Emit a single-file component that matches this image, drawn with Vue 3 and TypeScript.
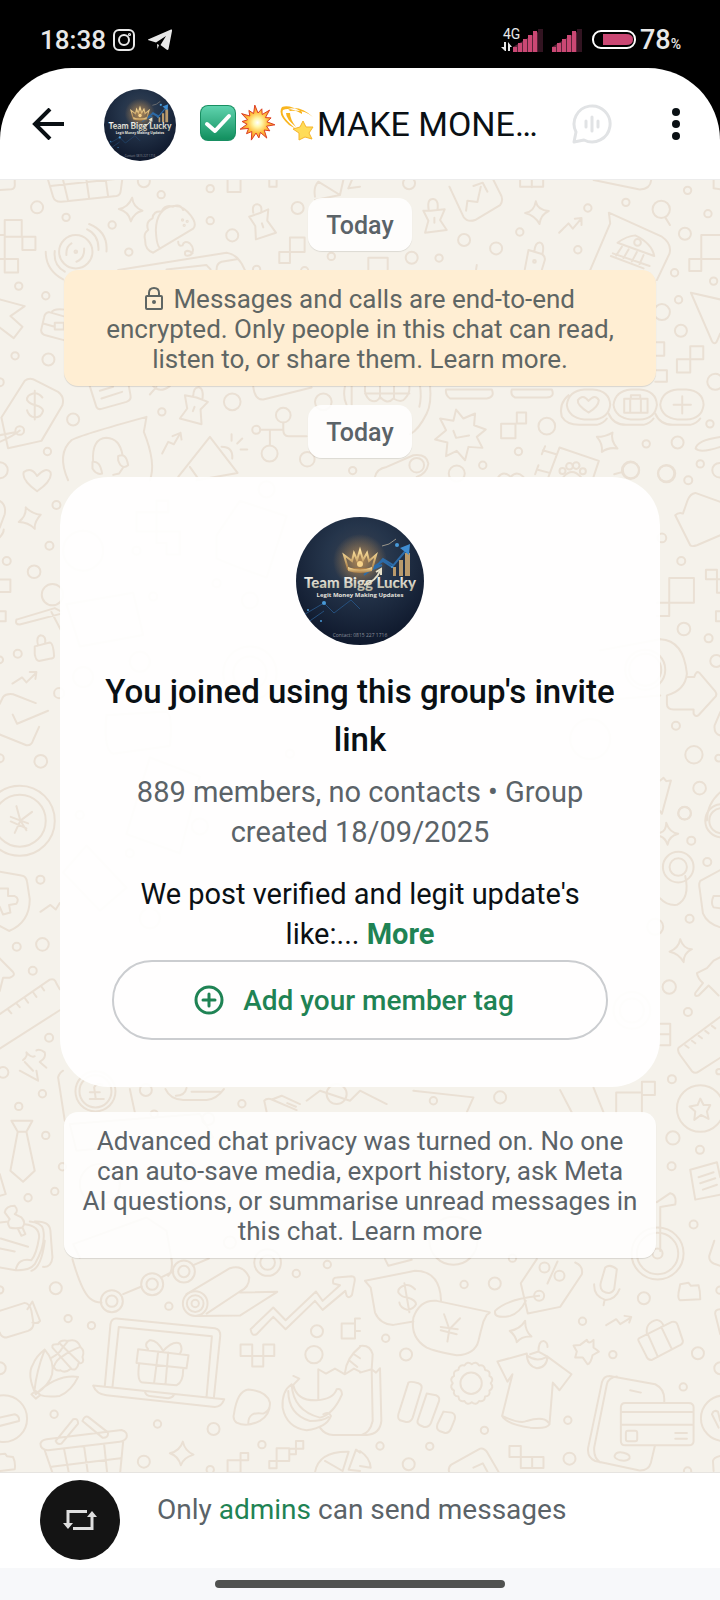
<script setup lang="ts">
interface Doodle {
  x: number
  y: number
  sx: number
  sy: number
  dots: string
  paths: string[]
}

const T = 1 / 3

const doodles: Doodle[] = [
  {
    x: 0, y: 180, sx: T, sy: T,
    dots: '112,82,18 199,112,11 484,44,11 432,4,18 337,135,11 387,216,11 631,26,11 631,122,11 697,166,18 893,84,18 994,229,11 770,268,11 914,272,11 57,318,11 138,347,11 46,527,11 146,538,18 228,215,50 228,215,4 220,718,18 697,665,25 486,695,11 143,814,11 850,705,22 769,749,12 809,820,24 922,837,22 1058,871,11 970,665,25 60,751,13 548,120,2 562,124,2 553,136,2 0,606,12 0,870,24',
    paths: [
      'M145 0L160 50Q165 66 185 65L350 48Q362 46 363 30L367 0M152 18L365-5M190 0L205 62M260 0L268 55M318 0L325 50M0 30L35 28Q47 26 45 10V0',
      'M397 53Q400 82 428 92Q403 97 393 124Q387 95 357 87Q385 83 397 53Z',
      'M0 165H15V120H66V170H107V210H68V170H15V237H55V277H15V237H0M15 165V237M683 0V36H722V0M808 0V20H830V0',
      'M262 148Q298 165 296 210M268 132Q325 155 320 214M165 213Q160 255 195 275M138 215Q138 270 190 298M200 225Q198 200 215 190M230 245Q255 235 253 205',
      'M460 218L580 146Q592 132 574 108Q550 74 520 78Q470 85 468 150Q470 200 482 205M460 218Q435 210 436 180Q430 160 445 150Q436 125 458 115Q460 92 485 95Q495 72 520 80Q540 70 550 90M535 185Q535 200 548 196Q552 180 570 190Q588 208 572 225Q552 232 556 215Q566 208 578 220',
      'M748 110L783 98L805 88L802 122L828 158L768 178L766 138ZM760 98Q755 72 773 73Q787 75 784 95M786 130L790 142',
      'M870 172H914V216H870ZM838 216H870V249H838Z',
      'M355 270L680 218Q715 222 735 270M650 268Q650 250 665 245L715 237M500 268L620 255L632 268',
      'M0 358L75 378L32 408L68 440L42 474L0 442',
      'M190 408L148 396Q135 398 133 412L124 450Q125 464 140 466L192 480M155 398Q160 385 190 388M130 430L165 440M165 428H192V448H165Z',
      'M75 602Q90 590 110 602L175 635Q195 650 188 675L125 782L25 804L5 712ZM0 785Q40 768 60 751M0 765L46 756',
      'M128 652Q115 636 100 640Q80 645 82 660Q90 672 108 675Q130 682 130 692Q125 712 105 712Q86 708 82 690M105 632V718',
      'M270 618L288 675Q292 690 305 686L380 665Q395 660 392 645L387 618M300 632L340 620M305 655L367 635M450 643L470 620M460 618Q480 640 510 618',
      'M205 900Q170 820 215 780Q240 765 440 710L432 755Q470 850 450 900M280 845Q275 775 320 773Q360 775 368 825M278 845Q300 840 307 880Q290 885 278 865ZM355 828Q378 815 385 855Q365 870 355 840ZM370 862L358 880L340 884',
      'M487 820L505 785L522 792L542 758M518 768L542 758L545 778',
      'M535 890L630 770L713 878L590 900M570 860L595 895M665 800Q700 800 697 835M695 762V782M712 790L727 775M722 808H742',
      'M555 645L590 652L624 665L602 688L605 732L540 715L562 685ZM580 650Q580 620 597 621Q612 625 608 655M584 680L579 693',
      'M781 749H850V728M810 749V795M850 749Q850 768 865 768H920M760 620Q765 660 790 658L935 622M1035 618Q1028 650 1040 675M1055 618V675',
      'M945 50Q940 20 955 5L1020 45L1030 0M1020 45L945 60M1045 25L1060-10M1045 25L1080 20',
    ],
  },
  {
    x: 360, y: 180, sx: T, sy: T,
    dots: '147,10,18 312,180,18 408,205,18 479,156,11 237,234,11 155,233,18 683,84,11 653,209,11 797,67,11 903,88,26 974,161,18 1043,101,11 982,31,11 943,278,11 1060,303,11 955,359,11 905,396,24 962,452,18 1065,605,24 560,738,25 858,791,11 952,787,18 1049,731,11 1020,851,11 918,880,24 475,814,11 368,855,11 290,880,24 170,855,22 812,870,24 832,187,10 523,244,4 1078,870,22 628,858,10 648,856,10 607,872,9 668,873,9',
    paths: [
      'M268 20L310 110Q322 128 345 120L420 75Q432 60 420 40L400 0M318 92L322 62L352 66L362 20M340 18L368 8L382 35',
      'M190 92L212 92L254 88L240 120L260 150L195 158L205 122ZM206 90Q200 55 220 57Q237 60 232 90M223 113V128M915 112L929 135',
      'M527 64Q532 90 566 93Q542 103 538 132Q525 107 495 99Q522 95 527 64M597 158L625 130L638 146L664 115M644 116L664 114L664 135',
      'M505 210L545 222Q556 228 554 240L545 270M505 210L494 268M523 212Q525 188 538 187Q554 190 547 222',
      'M690 270L750 130L746 98L905 170Q935 190 928 220L890 300M882 228L772 188Q800 168 825 166Q875 190 882 228M752 228L850 265M758 220L868 258M785 200L768 226M805 208L790 234M830 216L815 244M850 225L838 252',
      'M480 0V20H549V0M515 0V22M700 0L835 28Q870 30 873 0M1060 0V25L1080 28',
      'M1080 165H1023V273H987V237H1080M992 338L1080 358M992 338L1056 485Q1062 494 1069 485L1080 460',
      'M990 498H1029V537H990ZM950 537H990V577H950ZM888 486H912V527H888M888 570H920V605H885',
      'M672 628H698Q748 632 750 674Q745 716 698 718H672Q625 712 620 674Q625 632 672 628ZM625 645Q595 670 605 710Q620 735 660 734H710Q730 730 740 715',
      'M812 628H838Q888 632 890 674Q885 716 838 718H812Q765 712 760 674Q765 632 812 628ZM745 700Q760 735 800 734H850Q870 730 880 715',
      'M952 628H978Q1028 632 1030 674Q1025 716 978 718H952Q905 712 900 674Q905 632 952 628ZM885 700Q900 735 940 734H990Q1010 730 1020 715',
      'M685 697Q650 675 653 660Q668 640 685 662Q705 640 716 660Q715 680 685 697M792 656H862V698H792ZM810 656V698M842 656V698M812 654V645H840V654M940 674H992M966 648V700',
      'M15 620Q12 645 30 660Q50 670 60 650Q82 675 100 655Q125 670 135 655Q150 640 148 620M15 640H148M60 618V655M102 618V655M180 618Q185 650 178 680M210 618Q215 670 200 700Q175 750 150 762',
      'M258 628H395Q405 650 380 655H270Q255 645 258 628M455 628H575Q585 650 560 652H465Q450 645 455 628',
      'M288 688L310 715L345 700L342 735L377 748L350 770L367 803L325 800L315 840L290 812L258 828L262 787L225 778L258 750L240 715L280 722ZM280 752L288 773L327 766',
      'M470 697H498V730H470ZM423 731H466V774H423Z',
      'M710 770Q735 770 757 757Q750 780 772 805Q745 800 725 815Q728 790 710 770',
      'M565 890L598 802L716 842L700 890M555 798L545 822M548 810L588 822M535 855L525 882M530 868L568 878M610 890Q635 860 662 890M788 875L762 882',
      'M1080 770Q1010 780 1006 805Q1020 820 1080 800M45 890Q50 865 80 860L160 825Q200 820 205 850Q200 880 170 890M415 890Q430 870 452 890Q470 870 490 890M25 268V233H83V268M350 255L348 268',
    ],
  },
  {
    x: 0, y: 470, sx: T, sy: 0.3827,
    dots: '170,91,12 149,197,12 21,237,12 103,265,19 54,479,12 0,495,10 123,760,19 122,1069,12 51,1244,12 128,1238,19 99,1307,12 148,1482,12 60,915,105 60,915,78 158,325,32 178,582,15 0,752,12 250,210,60 410,210,12 650,295,12 420,500,30 250,540,30 240,900,12 390,1000,12 450,1170,30 750,340,24 750,530,80 750,530,50 600,930,24 870,740,12 800,50,24 460,330,12',
    paths: [
      'M112 55Q65 25 72 5Q95-10 112 15Q140-10 152 5Q160 25 112 55M78 97Q98 115 123 116Q103 135 105 153Q85 135 57 135Q80 120 78 97',
      'M0 80Q20 90 15 115L0 150M0 175Q12 165 12 155M0 285H32V318H0M0 368H18V394H0',
      'M50 390L165 360L182 368M50 390Q45 403 60 403L182 375M155 370L182 415',
      'M105 460L150 450Q160 450 163 485Q163 492 150 492L118 498Q108 497 105 480ZM115 458Q108 435 122 431Q140 432 136 452M38 557L67 541L80 554L108 530M90 527L110 527L107 545',
      'M0 610L10 592Q20 582 40 585L108 608M39 638L52 662L145 628M0 690L80 718Q95 720 100 705L118 670',
      'M50 877L62 915L97 892M62 915L45 947M62 915L80 940M33 905L85 922M33 917L80 935',
      'M0 1048L65 1058Q80 1060 82 1075L90 1120Q90 1180 28 1203L0 1190M0 1092H25V1112H45Q60 1118 50 1132L28 1135L32 1155L10 1160L0 1140M122 1153L152 1135L168 1147L180 1130',
      'M0 1275L40 1310Q48 1320 30 1325L10 1325L0 1360M0 1420L150 1330Q165 1325 170 1340L180 1355M0 1510L180 1410M25 1408L35 1418M50 1392L60 1402M75 1378L85 1390M100 1363L110 1375M125 1348L133 1358',
      'M70 1540Q85 1530 80 1520Q95 1535 105 1530M110 1515Q120 1510 135 1520Q140 1535 120 1545L140 1560M75 1545L100 1568',
      'M470 80H505V110H470ZM410 110H470V160H410ZM470 160H540V220H500V190H470ZM200 350L400 320L430 430L240 460Z',
      'M320 640L500 630Q520 640 510 720L340 740Q310 730 320 640M650 170L720 80L860 120L800 280Q700 250 650 230Z',
      'M380 950L450 750L600 800L540 1000ZM190 1050L260 980L380 1090L300 1150Z',
    ],
  },
  {
    x: 600, y: 470, sx: T, sy: T,
    dots: '91,0,26 199,10,26 264,30,12 185,203,13 243,272,12 251,476,19 325,504,12 348,572,18 227,766,12 281,853,26 298,953,19 253,1028,19 355,863,10 135,598,60 135,598,48',
    paths: [
      'M360 95L285 68Q270 70 262 90L248 130Q235 125 225 135L270 225Q275 230 290 225L360 195',
      'M207 323H281V397H207ZM170 397H207V437H170M317 298H350V327H317ZM360 327H350V367H360M360 423H347V453H360',
      'M180 507Q250 510 260 610Q255 660 200 675M200 675V700Q200 717 220 717H280V730Q287 742 296 733L347 677Q350 670 345 663L297 607Q287 600 282 620H260',
      'M360 725L343 765Q340 790 360 795M180 930L190 922L198 932L212 930L185 1030L178 1020M360 965Q320 1000 320 1050M0 540L180 507M0 690L180 675',
    ],
  },
  {
    x: 560, y: 470, sx: T, sy: 0.4975,
    dots: '373,689,19 393,744,12 441,787,12 354,797,46 354,797,26 388,901,12 327,1038,20 383,1088,12 335,1223,12 338,1341,20 419,1365,12 334,1398,12 400,1515,12 420,1282,70 485,704,50 485,704,38 476,1208,8 285,917,24 215,1085,55 215,1085,36 90,540,60',
    paths: [
      'M318 708Q328 728 354 730Q325 735 322 752Q315 738 300 735M300 728Q318 725 318 708M375 815Q390 860 350 873Q320 875 300 860',
      'M480 803L420 825Q415 830 418 840L428 890Q440 910 480 918M480 855L460 855Q450 870 460 878L480 880',
      'M360 942Q370 962 395 962Q370 970 370 988Q355 970 328 967Q355 960 360 942M480 978L460 985L440 1000L410 1010Q412 1020 428 1030L405 1050Q402 1058 415 1055L445 1035L475 1055',
      'M300 1112H330V1155H300M300 1133H330M480 1098L355 1160Q350 1165 360 1175L395 1207Q405 1213 415 1208L480 1180M375 1155L385 1160M395 1146L405 1151M415 1136L425 1141M435 1126L445 1131M455 1116L465 1121',
      'M420 1262L430 1275L450 1275L440 1288L445 1303L422 1295L402 1305L405 1288L388 1278L412 1275ZM168 1290V1250H245V1290M245 1228H284V1255H245ZM0 1245L35 1290M100 1240L130 1290',
      'M390 1405L470 1390L480 1420M390 1405L405 1465L480 1455M415 1420L460 1410M420 1432L465 1422M428 1445L470 1435M290 1470L330 1452Q350 1455 345 1475L300 1480V1568',
    ],
  },
  {
    x: 0, y: 1070, sx: T, sy: T,
    dots: '128,69,11 57,107,11 138,194,11 188,288,11 165,362,11 85,381,11 438,58,18 726,99,11 287,62,60 287,62,48 463,130,11 10,5,16 300,340,60 625,145,18 560,300,30 690,515,18 1010,70,30 1300,90,11 1500,80,18',
    paths: [
      'M35 150H98L80 183H54ZM54 183L32 300L70 333L105 300L80 183M60 0L115 30L110 0M195 150L175 20Q180 5 190 0M390 55L405 125',
      'M308 42Q290 35 283 50L288 85H270M288 85H312M270 65H300',
      'M15 425Q18 405 45 405Q58 420 45 430L65 440Q80 455 68 470Q45 475 30 470Q20 455 30 445ZM55 475L65 495L77 490L68 470',
      'M0 455L20 453M75 460Q120 465 118 500Q110 550 95 568Q55 560 48 598M0 590L48 598Q90 600 105 580Q140 520 130 475Q125 455 90 452M105 452Q150 450 152 480L158 560Q155 590 130 588M95 600Q125 590 135 510M3 503L85 528M0 533L45 542M0 310L18 370L0 375',
      'M497 55Q510 85 550 88H620Q650 85 672 55M528 75Q555 75 560 52M575 63H660M800 123L793 90Q800 82 812 85L890 118M820 85L845 75L900 100M862 97L888 108',
      'M920 90L960 60L1050 90L1080 60L1160 100M1240 60L1420 80L1400 125M240 560L220 520L440 440L500 480L515 565M210 160L600 130L640 200L230 240Z',
    ],
  },
  {
    x: 0, y: 1240, sx: T, sy: T,
    dots: '168,142,18 205,233,11 275,254,11 507,196,11 889,98,11 982,71,11 951,271,18 942,341,26 163,520,11 473,549,11 641,564,18 432,662,18 631,686,11 786,611,11 336,181,33 336,181,17 457,130,33 457,130,17 552,92,33 552,92,17 803,65,40 803,65,22 586,188,37 586,188,25 586,188,11 0,382,18 12,533,70 0,147,11',
    paths: [
      'M218 55Q245 150 270 172Q285 185 305 185M370 160L425 137M487 108L520 92M582 72L627 53M515 55Q520 90 505 105',
      'M560 160L690 82Q730 70 748 110Q748 140 720 152L620 218M720 155L832 153L720 224L590 225',
      'M752 265L820 200L857 238L948 152L968 180L1020 133L1000 128Q996 110 1010 110L1055 106Q1066 106 1064 120L1056 162Q1048 174 1040 165L1036 150L968 207L945 180L857 265L820 228L770 280Q755 287 752 265Z',
      'M315 435L332 250Q335 232 350 233L645 262Q662 265 661 285L642 470M338 438L357 258L636 286L620 467M280 434L673 475Q665 498 645 498L320 463Q290 460 280 434ZM435 452Q438 465 455 466L505 472Q518 470 522 462',
      'M415 325L566 343L560 382L410 366ZM418 368Q410 425 430 425L530 433Q550 425 550 385M475 332L463 425M505 335L497 428M490 330Q470 295 450 298Q430 310 445 325M490 330Q520 298 540 308Q550 325 540 338',
      'M108 460Q80 400 100 370Q110 345 135 326Q165 360 157 400Q150 430 108 460Q170 400 235 408Q215 450 180 465Q140 470 120 462M95 460L108 450L122 462L108 473ZM158 320Q155 308 175 310Q182 295 205 300Q232 292 242 318Q256 330 248 348Q256 368 236 368Q232 392 212 384Q196 398 182 388Q168 392 162 378M158 320L215 384M180 308L240 366M162 378Q170 355 190 345Q210 330 242 318M156 350Q178 338 185 325L205 300M104 450Q110 390 135 326',
      'M0 210L75 186Q90 188 95 210L100 240Q105 262 85 270L20 290Q5 290 0 275M83 205L98 182L121 240Q115 250 98 245M0 530L45 520Q60 525 58 540L0 555',
      'M168 600L220 535Q235 530 235 548L185 608Q172 612 168 600M248 540Q255 520 268 530L325 575Q325 592 308 590ZM140 595L365 567Q385 572 380 590Q375 600 360 602L145 628Q122 625 122 608Q125 598 140 595M135 628L158 695M193 625L207 695M253 617L264 695M313 610L322 695M370 602L361 695M155 677L362 652',
      'M549 602Q555 630 581 641Q550 650 543 673Q535 645 510 637Q540 630 549 602',
      'M722 311H757V345H722ZM790 311H823V345H790ZM757 345H790V377H757ZM722 636H745V658H722ZM683 658H722V695H683ZM888 600H910V623H888ZM868 623H888V640H868ZM830 622H868V660H830ZM808 660H830V682H808ZM1025 248H1065V293H1025ZM1080 233H1065V270H1080',
      'M702 520Q712 450 745 446Q800 450 810 485Q812 520 780 540Q740 560 710 545Q698 535 702 520M745 548Q745 510 790 518Q805 512 808 500',
      'M880 405L898 413L880 432Q890 480 950 478Q1000 475 1010 445Q1025 440 1026 460Q1000 520 960 530Q880 510 875 430Q845 450 848 500Q860 560 920 568Q980 560 993 525Q985 510 970 520M865 450Q865 520 930 540Q970 540 985 528',
      'M955 475V385L978 398L1005 383L1035 400L1062 383L1080 392M960 560Q975 582 1000 582H1080M1035 395Q1040 350 1080 318M1050 360L1072 378M1062 340L1080 352',
      'M945 695Q955 630 1046 632L1028 690L975 660M1080 635L1068 626L1046 686L1080 690M0 640L16 638L22 646L40 648Q48 665 45 685L0 690',
    ],
  },
  {
    x: 360, y: 1240, sx: T, sy: T,
    dots: '457,52,11 312,131,11 404,128,18 553,80,15 598,105,15 537,165,15 851,172,18 1079,148,11 667,241,11 758,341,11 77,292,11 138,341,18 1013,337,18 1080,382,18 969,438,11 333,427,32 623,538,11 373,568,11 60,615,11 209,616,11 146,670,18 628,653,18 982,690,11 892,38,15 892,38,78 892,38,62 1090,532,68 280,0,72',
    paths: [
      'M15 120L165 90Q240 90 243 180M15 120L32 140L45 215Q60 250 100 252L160 242M165 145Q150 130 135 133Q112 140 115 155Q125 170 142 170Q168 178 168 190Q160 205 142 207Q120 200 118 185M133 127L148 214',
      'M380 222Q395 214 385 213L230 180Q180 175 160 230Q150 290 200 320Q220 330 290 343Q345 340 355 300Q362 270 370 242ZM252 220L268 265L300 232M268 265L262 302M242 258L293 265M242 268L290 280',
      'M530 55L482 127L503 218L600 198L665 100Q670 75 645 65M592 62L562 128M537 165Q440 175 405 210Q400 235 450 225Q480 215 497 180',
      'M449 270Q480 265 495 240Q495 270 514 287Q485 285 470 304Q467 285 449 270',
      'M735 80Q750 68 770 85L762 145Q750 165 727 150Q718 140 722 125ZM702 130Q700 165 735 177Q765 178 778 145M733 178L730 193',
      'M960 130L985 126L992 135L1015 133Q1020 150 1020 175L960 178Q952 175 955 155ZM738 253L768 235L780 250L812 230M793 225L813 228L807 245',
      'M840 290L935 243Q950 240 953 255L968 300Q968 310 955 315L875 357Q862 358 858 345L835 300Q832 293 840 290M862 278L893 348M903 258L935 325M860 278Q855 245 890 237Q905 240 910 255',
      'M748 405L885 430Q915 445 912 482M748 405Q730 405 725 425L684 620Q680 650 705 660L835 688Q865 690 872 665L884 614M770 407Q745 410 740 430L702 620Q700 650 720 664M810 448L842 455',
      'M795 486H985Q1000 486 1000 500V600Q1000 613 985 613H795Q782 613 782 600V500Q782 486 795 486M782 513H1000M782 551H1000M803 569H825Q831 569 831 576V595Q831 601 825 601H803Q797 601 797 595V576Q797 569 803 569M945 576H980M945 593H980M763 645Q768 630 790 635Q812 640 808 652Q800 662 780 658Q762 652 763 645',
      'M500 338L412 362L442 422L457 400L426 525Q440 550 510 560Q560 565 568 550L578 425L598 448L634 400L562 347Q560 380 530 382Q500 375 500 338ZM502 345Q530 365 562 347M426 525Q480 550 500 540Q550 525 565 545M510 340L535 332L562 347M535 332Q535 300 550 300Q563 305 562 318',
      'M680 297Q685 312 700 297L700 320L716 332L697 343Q692 368 682 370L668 350L645 350L650 332L640 314L660 312Z',
      'M145 425Q150 420 175 427Q188 432 184 445L158 530Q152 545 138 543L120 538Q112 533 115 520ZM200 458L228 463Q240 468 237 480L213 545Q207 560 192 558L180 553Q170 548 173 538ZM250 512L275 515Q288 520 284 535L272 565Q265 578 255 576L238 570Q228 565 232 550Z',
      'M0 395L35 385L48 395L60 382L64 540Q60 580 20 582H0M35 385L38 540Q30 575 5 582M0 315Q30 310 38 340L35 385',
      'M268 695Q262 680 275 670L360 623Q372 620 382 635L415 692M340 680L368 667L382 692M448 615H482V648H448ZM482 648H550V681H482ZM516 648V681',
      'M1062 0L1047 45Q1045 60 1060 68L1080 75M1080 205Q1063 205 1065 220L1080 280M1080 540L1073 512Q1060 505 1055 520L1075 560M1060 690L1058 660Q1060 650 1080 645M0 630Q30 650 32 680L0 675M75 55L85 75L155 57',
      scallop(335, 427, 57, 16),
    ],
  },
]

function scallop(cx: number, cy: number, r: number, teeth: number): string {
  const step = (Math.PI * 2) / teeth
  let d = ''
  for (let i = 0; i <= teeth; i++) {
    const a = i * step
    const px = Math.round(cx + r * Math.cos(a))
    const py = Math.round(cy + r * Math.sin(a))
    if (i === 0) {
      d = `M${px} ${py}`
    } else {
      const m = a - step / 2
      d += `Q${Math.round(cx + (r + 12) * Math.cos(m))} ${Math.round(cy + (r + 12) * Math.sin(m))} ${px} ${py}`
    }
  }
  return d
}

function parseDots(s: string): number[][] {
  return s.split(' ').map((t) => t.split(',').map(Number))
}

const bars = [0, 1, 2, 3, 4]
const burst = Array.from({ length: 28 }, (_, i) => {
  const a = (i * Math.PI) / 14 + 0.1
  const r = i % 2 ? 10 : i % 4 ? 15 : 18
  return `${(18 + r * Math.cos(a)).toFixed(1)},${(18 + r * Math.sin(a)).toFixed(1)}`
}).join(' ')
</script>

<template>
  <div class="screen">
    <svg class="defs" aria-hidden="true">
      <defs>
        <radialGradient id="night" cx="50%" cy="32%" r="65%">
          <stop offset="0" stop-color="#3c4350" />
          <stop offset=".4" stop-color="#25354b" />
          <stop offset="1" stop-color="#101a2e" />
        </radialGradient>
        <linearGradient id="gold" x1="0" y1="0" x2="0" y2="1">
          <stop offset="0" stop-color="#ffe4a0" />
          <stop offset="1" stop-color="#a87c45" />
        </linearGradient>
        <linearGradient id="metal" x1="0" y1="0" x2="0" y2="1">
          <stop offset="0" stop-color="#fff" />
          <stop offset="1" stop-color="#b7b39c" />
        </linearGradient>
        <linearGradient id="check" x1="0" y1="0" x2="0" y2="1">
          <stop offset="0" stop-color="#5fd3ae" />
          <stop offset="1" stop-color="#139160" />
        </linearGradient>
        <radialGradient id="blast">
          <stop offset="0" stop-color="#fff" />
          <stop offset=".25" stop-color="#fff6a8" />
          <stop offset=".6" stop-color="#ffbe3c" />
          <stop offset="1" stop-color="#f5822a" />
        </radialGradient>
        <radialGradient id="glow">
          <stop offset="0" stop-color="#e0a456" stop-opacity=".7" />
          <stop offset="1" stop-color="#e0a456" stop-opacity="0" />
        </radialGradient>
        <clipPath id="disc"><circle cx="64" cy="64" r="64" /></clipPath>
        <symbol id="badge" viewBox="0 0 128 128">
          <g clip-path="url(#disc)">
            <rect width="128" height="128" fill="url(#night)" />
            <circle cx="64" cy="44" r="27" fill="url(#glow)" />
            <g fill="#b99a6c">
              <path d="M97 50h3v9h-3zM103 43h4v16h-4zM109 36h5v23h-5z" />
            </g>
            <path d="M68 58L79 49L87 44L96 50L112 31M79 51L87 42L97 48M70 55L86 48" fill="none" stroke="#2c6ba8" stroke-width="2" />
            <path d="M104 31L114 27L113 38Z" fill="#3f8dd2" />
            <path d="M86 29L93 27L100 22" fill="none" stroke="#9b968b" stroke-width="1" />
            <path d="M4 100L28 86L38 96L55 83L64 92M8 108L28 94" fill="none" stroke="#26507d" stroke-width="1" />
            <g fill="#489ad8"><circle cx="28" cy="86" r="2" /><circle cx="12" cy="93" r="1" /><circle cx="25" cy="104" r="1" /><circle cx="96" cy="50" r="1" /><circle cx="101" cy="28" r="2" /></g>
            <path d="M52 52L48 38L56 44L58 36L61 43L64 33L67 43L71 36L73 44L80 38L76 52Z" fill="none" stroke="url(#gold)" stroke-width="2" />
            <path d="M52 50Q64 55 76 50V54Q64 58 52 54Z" fill="url(#gold)" />
            <circle cx="64" cy="47" r="3" fill="#f8d48b" />
            <text x="64" y="71" class="badge-name" text-anchor="middle" fill="url(#metal)">Team Bigg Lucky</text>
            <path d="M68 68Q80 64 84 54M80 55L85 52L85 58" fill="none" stroke="#e7e1c9" stroke-width="2" />
            <text x="64" y="80" class="badge-sub" text-anchor="middle" fill="#e4e2de">Legit Money Making Updates</text>
            <text x="64" y="120" class="badge-contact" text-anchor="middle" fill="#8b909b">Contact: 0815 227 1716</text>
          </g>
        </symbol>
      </defs>
    </svg>

    <div class="status">
      <div class="status-side">
        <span class="clock">18:38</span>
        <svg class="insta" viewBox="0 0 22 22" width="22" height="22" fill="none" stroke="#e8e8e8" stroke-width="2">
          <rect x="1" y="1" width="20" height="20" rx="5" /><circle cx="11" cy="11" r="5" /><circle cx="16.500" cy="5.500" r=".6" />
        </svg>
        <svg viewBox="0 0 24 22" width="24" height="22" fill="#e8e8e8">
          <path d="M0 10.500L23 .5Q24.500 0 24 2L20.500 20Q20 21.500 18.500 20.500L12.500 16L18 7L8 13.500L1.500 11.500Q-1 11 0 10.500ZM9 15L11 16L9.500 20Z" />
        </svg>
      </div>
      <div class="status-side">
        <span class="net">
          <span>4G</span>
          <svg viewBox="0 0 12 10" width="12" height="10" fill="#e8e8e8"><path d="M3 0H5V9H4L0 5H3ZM7 9V0L11 5H9V9Z" /></svg>
        </span>
        <svg class="signal" viewBox="0 0 31 23" width="31" height="23">
          <path d="M0 23V18L25 3V23Z" fill="#5a2238" />
          <rect v-for="b in bars" :key="b" :x="b * 5" :y="18 - b * 4" width="4" :height="5 + b * 4" fill="#cb4874" />
          <rect x="25" y="0" width="5" height="23" fill="#321421" />
        </svg>
        <svg class="signal second" viewBox="0 0 31 23" width="31" height="23">
          <path d="M0 23V18L25 3V23Z" fill="#5a2238" />
          <rect v-for="b in bars" :key="b" :x="b * 5" :y="18 - b * 4" width="4" :height="5 + b * 4" fill="#cb4874" />
          <rect x="25" y="0" width="5" height="23" fill="#321421" />
        </svg>
        <svg class="battery" viewBox="0 0 44 20" width="44" height="20">
          <rect x="1" y="1" width="42" height="17" rx="8" fill="none" stroke="#fff" stroke-width="2" />
          <path d="M11 4H34Q41 4 41 9.500Q41 15 34 15H11Z" fill="#cb4874" />
        </svg>
        <span class="percent">78<small>%</small></span>
      </div>
    </div>

    <header class="bar">
      <button class="icon back" aria-label="Back">
        <svg viewBox="0 0 32 32" width="32" height="32" fill="none" stroke="#0a1014" stroke-width="4"><path d="M32 16H3M18 1L3 16L18 31" /></svg>
      </button>
      <svg class="avatar-small" role="img" aria-label="Group photo"><use href="#badge" /></svg>
      <h1>
        <svg viewBox="0 0 36 36" width="36" height="36"><rect width="36" height="36" rx="8" fill="#188f62" /><rect x="1" y="1" width="34" height="33" rx="7" fill="url(#check)" /><path d="M7 19L15 26L29 11" fill="none" stroke="#fff" stroke-width="4" stroke-linecap="round" stroke-linejoin="round" /></svg>
        <svg viewBox="0 0 36 36" width="36" height="36"><polygon :points="burst" fill="url(#blast)" stroke="#dc3f22" stroke-width="1" /></svg>
        <svg viewBox="0 0 36 36" width="36" height="36">
          <path d="M24 7Q11-1 4 2Q-1 9 11 20L18 24Q2 11 5 5Q12 2 24 9ZM10 4Q22 0 35 12Q25 4 12 6ZM8 8Q8 14 18 22Q12 14 12 8Z" fill="#f9b51e" />
          <path d="M25 16L28 22L35 22L31 28L34 34L27 32L21 35L21 28L15 24L22 22Z" fill="#ffdc58" stroke="#f6b52c" stroke-width="1" stroke-linejoin="round" />
        </svg>
        <span>MAKE MONE…</span>
      </h1>
      <button class="icon voice" aria-label="Start voice chat">
        <svg viewBox="0 0 40 40" width="40" height="40" fill="none" stroke="#e1e3e5" stroke-width="3" stroke-linecap="round" stroke-linejoin="round"><path d="M4 28A18 18 0 1 1 12 36L2 38Z" /><path d="M14 17V23M20 13V27M26 17V23" /></svg>
      </button>
      <button class="icon more-menu" aria-label="More options">
        <svg viewBox="0 0 8 32" width="8" height="32" fill="#0a1014"><circle cx="4" cy="4" r="4" /><circle cx="4" cy="16" r="4" /><circle cx="4" cy="28" r="4" /></svg>
      </button>
    </header>

    <main class="chat">
      <svg class="wallpaper" viewBox="0 180 720 1291" preserveAspectRatio="xMidYMin slice" aria-hidden="true">
        <g v-for="(g, i) in doodles" :key="i" :transform="`translate(${g.x} ${g.y}) scale(${g.sx} ${g.sy})`">
          <ellipse v-for="(c, j) in parseDots(g.dots)" :key="'c' + j" :cx="c[0]" :cy="c[1]" :rx="c[2]" :ry="(c[2] * g.sx) / g.sy" />
          <path v-for="(p, j) in g.paths" :key="'p' + j" :d="p" />
        </g>
      </svg>

      <div class="pill">Today</div>
      <p class="notice amber">
        <svg class="lock" viewBox="0 0 18 24" width="18" height="24"><path d="M2 9H16Q17 9 17 10V21Q17 22 16 22H2Q1 22 1 21V10Q1 9 2 9ZM4 9V6Q4 1 9 1Q14 1 14 6V9" fill="none" stroke="#5f6664" stroke-width="2" /><circle cx="9" cy="15" r="2" fill="#5f6664" /></svg>
        Messages and calls are end-to-end<br />encrypted. Only people in this chat can read,<br />listen to, or share them. <a href="#">Learn more.</a>
      </p>
      <div class="pill">Today</div>

      <section class="card">
        <svg class="avatar-large" role="img" aria-label="Group photo"><use href="#badge" /></svg>
        <h2>You joined using this group's invite<br />link</h2>
        <p class="meta">889 members, no contacts • Group<br />created 18/09/2025</p>
        <p class="about">We post verified and legit update's<br />like:... <a href="#">More</a></p>
        <button class="tag">
          <svg viewBox="0 0 30 30" width="30" height="30" fill="none" stroke="#1f8354" stroke-width="3"><circle cx="15" cy="15" r="13" /><path d="M15 9V21M9 15H21" stroke-linecap="round" /></svg>
          Add your member tag
        </button>
      </section>

      <p class="notice">
        Advanced chat privacy was turned on. No one<br />can auto-save media, export history, ask Meta<br />AI questions, or summarise unread messages in<br />this chat. <a href="#">Learn more</a>
      </p>
    </main>

    <footer class="composer">
      <button class="fab" aria-label="Rotate screen">
        <svg viewBox="0 0 34 20" width="34" height="20" fill="none" stroke="#dedede" stroke-width="3"><path d="M24 1.500H5V15M10 18.500H29V5" /><path d="M0 13H10L5 19ZM24 7H34L29 1Z" fill="#dedede" stroke="none" /></svg>
      </button>
      <p>Only <a href="#">admins</a> can send messages</p>
    </footer>
    <div class="gesture"><span></span></div>
  </div>
</template>

<style>
body {
  margin: 0;
  background: #000;
}
</style>

<style scoped>
.screen {
  min-height: 100vh;
  display: flex;
  flex-direction: column;
  background: #000;
  font-family: Roboto, "Liberation Sans", sans-serif;
  color: #0a1014;
}
.screen * {
  box-sizing: border-box;
}
.defs {
  position: absolute;
  width: 0;
  height: 0;
}
h1, h2, p {
  margin: 0;
  font-weight: 400;
}
a {
  color: inherit;
  text-decoration: none;
}
button {
  font: inherit;
  border: 0;
  padding: 0;
  background: none;
  cursor: pointer;
}
svg {
  display: block;
  flex: none;
}
.badge-name {
  font: 900 15px Lato, sans-serif;
}
.badge-sub {
  font: 700 6px "Open Sans", sans-serif;
}
.badge-contact {
  font: 5px "Open Sans", sans-serif;
}
.status {
  height: 68px;
  padding: 12px 39px 0 40px;
  display: flex;
  justify-content: space-between;
  align-items: center;
  color: #e8e8e8;
}
.status-side {
  display: flex;
  align-items: center;
}
.clock {
  font-size: 26px;
  font-weight: 500;
}
.insta {
  margin: 0 13px 0 7px;
}
.net {
  width: 20px;
  height: 24px;
  display: flex;
  flex-direction: column;
  justify-content: space-between;
  font-size: 14px;
  line-height: 12px;
}
.net span {
  padding-left: 2px;
}
.signal {
  margin-left: -8px;
}
.second {
  margin-left: 8px;
}
.battery {
  margin: 0 4px 0 9px;
}
.percent {
  font-size: 27px;
  font-weight: 500;
}
.percent small {
  font-size: 14px;
}
.bar {
  height: 112px;
  padding: 0 40px 0 32px;
  display: flex;
  align-items: center;
  background: #fff;
  border-bottom: 1px solid #ececec;
  border-radius: 72px 72px 0 0;
}
.avatar-small {
  width: 72px;
  height: 72px;
  margin: 2px 24px 0 40px;
}
.bar h1 {
  flex: 1;
  display: flex;
  align-items: center;
  gap: 3px;
  font-size: 34px;
  line-height: 40px;
  white-space: nowrap;
}
.bar h1 svg {
  margin-bottom: 2px;
}
.voice {
  margin-right: 60px;
}
.chat {
  position: relative;
  flex: 1;
  padding: 18px 60px 24px;
  display: flex;
  flex-direction: column;
  align-items: center;
  gap: 19px;
  background: #f5f2eb;
}
.wallpaper {
  position: absolute;
  inset: 0;
  width: 100%;
  height: 100%;
}
.wallpaper path,
.wallpaper ellipse {
  fill: none;
  stroke: #eae0d4;
  stroke-width: 2px;
  stroke-linejoin: round;
  stroke-linecap: round;
  vector-effect: non-scaling-stroke;
}
.pill,
.notice,
.card {
  position: relative;
  text-align: center;
}
.pill {
  padding: 2px 18px 0;
  font-size: 25px;
  line-height: 51px;
  font-weight: 500;
  color: #5b6368;
  background: rgba(255, 255, 255, 0.85);
  border-radius: 14px;
  box-shadow: 0 1px 1px rgba(0, 0, 0, 0.1);
}
.notice {
  align-self: stretch;
  margin: 0 4px;
  padding: 14px 12px 12px;
  font-size: 26px;
  line-height: 30px;
  color: #5b6368;
  background: rgba(255, 255, 255, 0.85);
  border-radius: 14px;
  box-shadow: 0 1px 1px rgba(0, 0, 0, 0.12);
}
.amber {
  background: #ffeed3;
  color: #5f6664;
}
.lock {
  display: inline-block;
  margin-right: 4px;
  vertical-align: -3px;
}
.card {
  align-self: stretch;
  margin-bottom: 6px;
  padding: 40px 40px 47px;
  background: rgba(255, 255, 255, 0.92);
  border-radius: 48px;
}
.avatar-large {
  width: 128px;
  height: 128px;
  margin: 0 auto;
}
.card h2 {
  margin-top: 23px;
  font-size: 33px;
  line-height: 48px;
  font-weight: 500;
}
.meta {
  margin-top: 8px;
  font-size: 29px;
  line-height: 40px;
  color: #5b6368;
}
.about {
  margin-top: 22px;
  font-size: 29px;
  line-height: 40px;
}
.about a {
  color: #1f8354;
  font-weight: 700;
}
.tag {
  width: calc(100% - 24px);
  height: 80px;
  margin: 6px auto 0;
  padding-right: 12px;
  display: flex;
  align-items: center;
  justify-content: center;
  gap: 19px;
  border: 2px solid #cbcdd0;
  border-radius: 40px;
  font-size: 28px;
  font-weight: 500;
  color: #1f8354;
}
.composer {
  height: 96px;
  padding: 7px 40px 0;
  display: flex;
  gap: 37px;
  background: #fff;
  border-top: 1px solid #e6e4e0;
}
.fab {
  width: 80px;
  height: 80px;
  display: flex;
  align-items: center;
  justify-content: center;
  border-radius: 50%;
  background: #141414;
}
.composer p {
  padding-top: 10px;
  font-size: 28px;
  line-height: 40px;
  color: #5b6368;
}
.composer a {
  color: #1f8354;
}
.gesture {
  height: 32px;
  padding-top: 12px;
  background: #f7f8fa;
}
.gesture span {
  display: block;
  width: 290px;
  height: 8px;
  margin: 0 auto;
  border-radius: 4px;
  background: #505250;
}
</style>
